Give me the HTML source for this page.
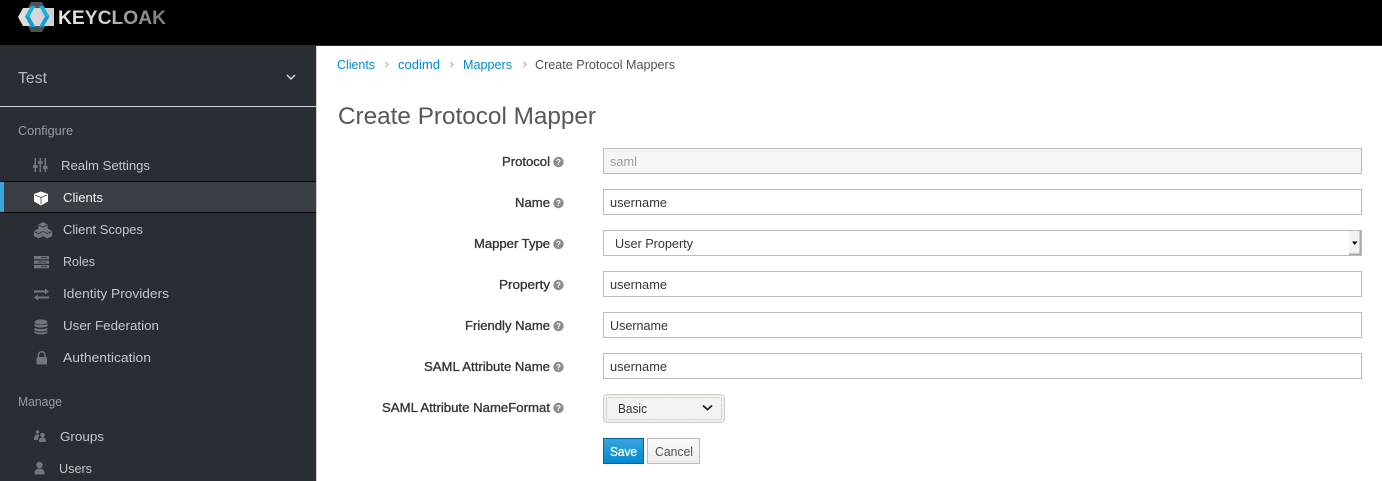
<!DOCTYPE html>
<html><head><meta charset="utf-8"><title>Create Protocol Mapper</title>
<style>
html,body{margin:0;padding:0;background:#fff;width:1382px;height:481px;overflow:hidden}
svg{display:block}
text{font-family:"Liberation Sans",sans-serif;font-size:13px;white-space:pre}
.n{fill:#c4c6c8}
.g{fill:#9a9c9e}
.l{fill:#0088ce}
.b{fill:#363636;stroke:#363636;stroke-width:.35px;font-size:13px}
.v{fill:#363636}
.i{fill:#72767b}
.f{fill:#fff;stroke:#bbb;stroke-width:1}
.q{font-size:8px;font-weight:700;text-anchor:middle;fill:#fff}
</style></head><body>
<svg width="1382" height="481" viewBox="0 0 1382 481" xmlns="http://www.w3.org/2000/svg">
<defs>
<linearGradient id="kg" gradientUnits="userSpaceOnUse" x1="58" x2="166" y1="0" y2="0"><stop offset="0" stop-color="#e8e8e8"/><stop offset=".45" stop-color="#c8c8c8"/><stop offset=".6" stop-color="#a0a0a0"/><stop offset="1" stop-color="#7c7c7c"/></linearGradient>
<linearGradient id="hg" x1="0" x2="1" y1="0" y2="0"><stop offset="0" stop-color="#e0e0e0"/><stop offset="1" stop-color="#cfcfcf"/></linearGradient>
<linearGradient id="sv" x1="0" x2="0" y1="0" y2="1"><stop offset="0" stop-color="#39a5dc"/><stop offset="1" stop-color="#0088ce"/></linearGradient>
<linearGradient id="cn" x1="0" x2="0" y1="0" y2="1"><stop offset="0" stop-color="#fafafa"/><stop offset="1" stop-color="#ededed"/></linearGradient>
</defs>

<rect width="1382" height="45" fill="#000"/>
<rect y="45" width="1382" height="1" fill="#292e34"/>
<polygon points="23,17 31,2 42,2 50,17 42,32 31,32" fill="#4d5258"/>
<polygon points="18,17 23,8 54,8 54,26 23,26" fill="url(#hg)"/>
<polygon points="31,6 35.500,6 29.500,16.500 25,16.500" fill="#17b3e6"/>
<polygon points="25,16.500 29.500,16.500 35.500,27 31,27" fill="#0f9ed6"/>
<polygon points="39,6 43.500,6 49.500,16.500 45,16.500" fill="#17b3e6"/>
<polygon points="45,16.500 49.500,16.500 43.500,27 39,27" fill="#0f9ed6"/>
<text x="58" y="24" style="font-size:19.500px;font-weight:700" fill="url(#kg)" textLength="108" lengthAdjust="spacingAndGlyphs">KEYCLOAK</text>

<rect x="0" y="45" width="316" height="436" fill="#292e34"/>
<rect x="316" y="46" width="1" height="435" fill="#d1d1d1"/>
<text x="18" y="83" style="font-size:16px;fill:#b9bbbd" textLength="29" lengthAdjust="spacingAndGlyphs">Test</text>
<path d="M287 75l4 4 4-4" fill="none" stroke="#e0e0e0" stroke-width="1.400"/>
<rect x="0" y="106" width="316" height="1" fill="#d1d1d1"/>

<text x="18" y="135" class="g" textLength="55" lengthAdjust="spacingAndGlyphs">Configure</text>

<g class="i">
<rect x="34.500" y="158" width="1.600" height="14"/><rect x="33" y="165" width="4.600" height="3"/>
<rect x="39.500" y="158" width="1.600" height="14"/><rect x="38" y="161" width="4.600" height="3"/>
<rect x="44.500" y="158" width="1.600" height="14"/><rect x="43" y="166" width="4.600" height="3"/>
</g>
<text x="61" y="170" class="n" textLength="89" lengthAdjust="spacingAndGlyphs">Realm Settings</text>

<rect x="0" y="181" width="316" height="32" fill="#393f44"/>
<rect x="0" y="181" width="316" height="1" fill="#030303"/>
<rect x="0" y="212" width="316" height="1" fill="#030303"/>
<rect x="0" y="182" width="4" height="30" fill="#39a5dc"/>
<path d="M41 191.500l7 2.500v7.500l-7 4-7-4V194z" fill="#fff"/>
<path d="M35 195l6 2.500 6-2.500M41 197.500v7" stroke="#393f44" stroke-width=".8" fill="none"/>
<text x="63" y="202" fill="#f1f1f1" textLength="40" lengthAdjust="spacingAndGlyphs">Clients</text>

<g class="i">
<path d="M43 222l4.700 2.500v5L43 232l-4.700-2.500v-5z"/>
<path d="M38.500 228.500l4.700 2.500v5l-4.700 2.500-4.700-2.500v-5z"/>
<path d="M47.500 228.500l4.700 2.500v5l-4.700 2.500-4.700-2.500v-5z"/>
</g>
<path d="M38.800 225l4.200 2.200 4.200-2.200M34.300 231.500l4.200 2.200 4.200-2.200M43.300 231.500l4.200 2.200 4.200-2.200" stroke="#292e34" stroke-width=".8" fill="none"/>
<text x="63" y="234" class="n" textLength="80" lengthAdjust="spacingAndGlyphs">Client Scopes</text>

<g class="i">
<rect x="34" y="256" width="15" height="3.300"/><rect x="34" y="260.500" width="15" height="3.300"/><rect x="34" y="265" width="15" height="3.300"/>
</g>
<path d="M41 257.600h6M38 262.100h9M41 266.600h6" stroke="#292e34" stroke-width=".7"/>
<text x="63" y="266" class="n" textLength="32" lengthAdjust="spacingAndGlyphs">Roles</text>

<path d="M34 290.500h11v-2l4 3-4 3v-2H34zM49 296.500H38v-2l-4 3 4 3v-2h11z" class="i"/>
<text x="63" y="298" class="n" textLength="106" lengthAdjust="spacingAndGlyphs">Identity Providers</text>

<g class="i">
<ellipse cx="41" cy="322" rx="6.500" ry="2.500"/>
<path d="M34.500 323.500c1 2 12 2 13 0v2.500c-1 2-12 2-13 0zM34.500 327.500c1 2 12 2 13 0v2.500c-1 2-12 2-13 0z"/>
<path d="M34.500 331c1 2 12 2 13 0v1.500c-1 2.500-12 2.500-13 0z"/>
</g>
<text x="63" y="330" class="n" textLength="96" lengthAdjust="spacingAndGlyphs">User Federation</text>

<rect x="36.500" y="357" width="10.500" height="7.500" rx="1" class="i"/>
<path d="M38.500 357.500v-2.500a3.200 3.200 0 0 1 6.500 0v2.500" fill="none" stroke="#72767b" stroke-width="1.500"/>
<text x="63" y="362" class="n" textLength="88" lengthAdjust="spacingAndGlyphs">Authentication</text>

<text x="18" y="406" class="g" textLength="44" lengthAdjust="spacingAndGlyphs">Manage</text>

<g class="i">
<circle cx="37.500" cy="432" r="1.800"/><path d="M34 440c0-4 1-5.500 3.500-5.500 1 0 1.800.5 2 1-1 1-1.500 2.500-1.500 4.500z"/>
<circle cx="42.500" cy="435" r="2.300"/><path d="M39 442c0-3.500 1-4.500 3.500-4.500s3.500 1 3.500 4.500z"/>
</g>
<text x="60" y="441" class="n" textLength="44" lengthAdjust="spacingAndGlyphs">Groups</text>

<g class="i">
<circle cx="39.500" cy="465" r="3.200"/><path d="M34.500 474.500c0-4.500 1.500-6 5-6s5 1.500 5 6z"/>
</g>
<text x="59" y="473" class="n" textLength="33" lengthAdjust="spacingAndGlyphs">Users</text>

<text x="337" y="69" class="l" textLength="38" lengthAdjust="spacingAndGlyphs">Clients</text>
<path d="M385.500 62l2.500 2.500-2.500 2.500M450.500 62l2.500 2.500-2.500 2.500M523.500 62l2.500 2.500-2.500 2.500" fill="none" stroke="#a8a8a8"/>
<text x="398" y="69" class="l" textLength="42" lengthAdjust="spacingAndGlyphs">codimd</text>
<text x="463" y="69" class="l" textLength="49" lengthAdjust="spacingAndGlyphs">Mappers</text>
<text x="535" y="69" fill="#4d5258" textLength="140" lengthAdjust="spacingAndGlyphs">Create Protocol Mappers</text>

<text x="338" y="124" style="font-size:24px;fill:#54585c" textLength="258" lengthAdjust="spacingAndGlyphs">Create Protocol Mapper</text>

<text x="502" y="166" class="b" textLength="48" lengthAdjust="spacingAndGlyphs">Protocol</text>
<text x="515" y="207" class="b" textLength="35" lengthAdjust="spacingAndGlyphs">Name</text>
<text x="474" y="248" class="b" textLength="76" lengthAdjust="spacingAndGlyphs">Mapper Type</text>
<text x="499" y="289" class="b" textLength="51" lengthAdjust="spacingAndGlyphs">Property</text>
<text x="465" y="330" class="b" textLength="85" lengthAdjust="spacingAndGlyphs">Friendly Name</text>
<text x="424" y="371" class="b" textLength="126" lengthAdjust="spacingAndGlyphs">SAML Attribute Name</text>
<text x="382" y="412" class="b" textLength="168" lengthAdjust="spacingAndGlyphs">SAML Attribute NameFormat</text>

<g fill="#8b8d8f">
<circle cx="558.500" cy="162" r="5.200"/><circle cx="558.500" cy="203" r="5.200"/><circle cx="558.500" cy="244" r="5.200"/><circle cx="558.500" cy="285" r="5.200"/><circle cx="558.500" cy="326" r="5.200"/><circle cx="558.500" cy="367" r="5.200"/><circle cx="558.500" cy="408" r="5.200"/>
</g>
<text x="558.500" y="165" class="q">?</text>
<text x="558.500" y="206" class="q">?</text>
<text x="558.500" y="247" class="q">?</text>
<text x="558.500" y="288" class="q">?</text>
<text x="558.500" y="329" class="q">?</text>
<text x="558.500" y="370" class="q">?</text>
<text x="558.500" y="411" class="q">?</text>

<rect x="603.500" y="148.500" width="758" height="25" fill="#f5f5f5" stroke="#bbb"/>
<text x="610" y="166" fill="#9c9c9c" textLength="27" lengthAdjust="spacingAndGlyphs">saml</text>
<rect x="603.500" y="189.500" width="758" height="25" class="f"/>
<text x="610" y="207" class="v" textLength="57" lengthAdjust="spacingAndGlyphs">username</text>
<rect x="603.500" y="230.500" width="758" height="25" class="f"/>
<text x="615" y="248" class="v" textLength="78" lengthAdjust="spacingAndGlyphs">User Property</text>
<rect x="1349" y="231" width="12" height="24" fill="#f2f2f2"/>
<rect x="1359.500" y="231" width="1.500" height="24" fill="#a8a8a8"/>
<rect x="1349" y="253.500" width="12" height="1.500" fill="#a8a8a8"/>
<path d="M1352 241.500h5.500l-2.750 3.500z" fill="#000"/>
<rect x="603.500" y="271.500" width="758" height="25" class="f"/>
<text x="610" y="289" class="v" textLength="57" lengthAdjust="spacingAndGlyphs">username</text>
<rect x="603.500" y="312.500" width="758" height="25" class="f"/>
<text x="610" y="330" class="v" textLength="58" lengthAdjust="spacingAndGlyphs">Username</text>
<rect x="603.500" y="353.500" width="758" height="25" class="f"/>
<text x="610" y="371" class="v" textLength="57" lengthAdjust="spacingAndGlyphs">username</text>

<rect x="603.500" y="394.500" width="121" height="28" rx="4" fill="#f4f1ec" stroke="#cfccc6"/>
<rect x="606.500" y="397.500" width="115" height="22" rx="2" fill="#f3f3f3" stroke="#c4c4c4" stroke-dasharray="1.500 1"/>
<text x="618" y="413" class="v" textLength="29" lengthAdjust="spacingAndGlyphs">Basic</text>
<path d="M703 405.500l4.500 4 4.500-4" fill="none" stroke="#222" stroke-width="1.800"/>

<rect x="603.500" y="438.500" width="40" height="25" fill="url(#sv)" stroke="#00659c"/>
<text x="610" y="456" style="fill:#fff;stroke:#fff;stroke-width:.3px" textLength="27" lengthAdjust="spacingAndGlyphs">Save</text>
<rect x="647.500" y="438.500" width="52" height="25" fill="url(#cn)" stroke="#bbb"/>
<text x="655" y="456" style="fill:#4d5258" textLength="38" lengthAdjust="spacingAndGlyphs">Cancel</text>
</svg>
</body></html>
